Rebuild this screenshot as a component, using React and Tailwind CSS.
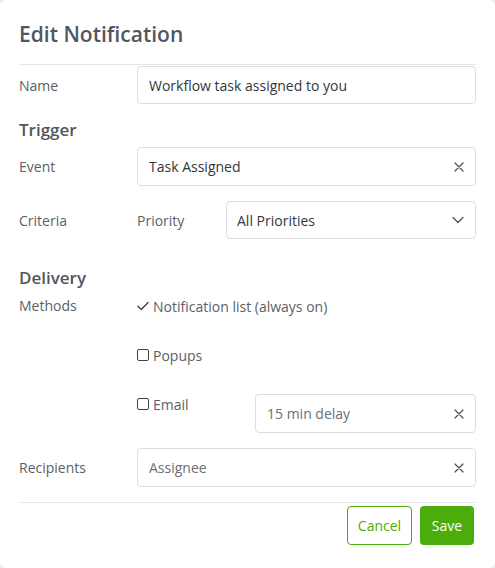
import React from "react";

const XIcon = () => (
  <svg width="10" height="10" viewBox="0 0 10 10" className="shrink-0">
    <path d="M1 1L9 9M9 1L1 9" stroke="#4b4f56" strokeWidth="1.2" strokeLinecap="round" />
  </svg>
);

const Chevron = () => (
  <svg width="12" height="8" viewBox="0 0 12 8" className="shrink-0">
    <path d="M1 1.5L6 6.5L11 1.5" fill="none" stroke="#4b4f56" strokeWidth="1.2" strokeLinecap="round" strokeLinejoin="round" />
  </svg>
);

const Check = () => (
  <svg width="12" height="10" viewBox="0 0 12 10" className="shrink-0">
    <path d="M1 5.2L4.3 8.5L11 1.5" fill="none" stroke="#40444b" strokeWidth="1.4" strokeLinecap="round" strokeLinejoin="round" />
  </svg>
);

const Box = () => (
  <span className="inline-block w-[12px] h-[12px] border border-[#3e4249] rounded-[2px] shrink-0" />
);

export default function App() {
  return (
    <div
      className="w-[495px] h-[568px] bg-[#ededed]"
      style={{ fontFamily: '"Open Sans", "Noto Sans", sans-serif' }}
    >
      <div className="w-full h-full bg-white rounded-[6px] px-[19px] flex flex-col text-[14px] text-[#5b5f67]">
        <div className="pt-[20px] pb-[16px] border-b border-[#e4e5e8]">
          <h1 className="text-[21px] leading-[28px] font-semibold text-[#52565e]">Edit Notification</h1>
        </div>

        <div className="mt-[1px] grid grid-cols-[118px_1fr] items-center">
          <span>Name</span>
          <div className="h-[38px] border border-[#dcdee2] rounded-[4px] px-[11px] flex items-center text-[#33363b]">
            Workflow task assigned to you
          </div>
        </div>

        <h2 className="mt-[14px] text-[17px] leading-[24px] font-semibold text-[#52565e]">Trigger</h2>

        <div className="mt-[5px] grid grid-cols-[118px_1fr] items-center">
          <span>Event</span>
          <div className="h-[39px] border border-[#dcdee2] rounded-[4px] pl-[11px] pr-[11px] flex items-center justify-between text-[#33363b]">
            <span>Task Assigned</span>
            <XIcon />
          </div>
        </div>

        <div className="mt-[15px] grid grid-cols-[118px_89px_1fr] items-center">
          <span>Criteria</span>
          <span>Priority</span>
          <div className="h-[38px] border border-[#dcdee2] rounded-[4px] pl-[10px] pr-[11px] flex items-center justify-between text-[#33363b]">
            <span>All Priorities</span>
            <Chevron />
          </div>
        </div>

        <h2 className="mt-[27px] text-[17px] leading-[24px] font-semibold text-[#52565e]">Delivery</h2>

        <div className="mt-[6px] grid grid-cols-[118px_1fr] items-start">
          <span className="leading-[20px]">Methods</span>
          <div className="flex flex-col">
            <div className="h-[20px] flex items-center gap-[4px]">
              <Check />
              <span>Notification list (always on)</span>
            </div>
            <div className="mt-[29px] h-[20px] flex items-center gap-[4px]">
              <Box />
              <span>Popups</span>
            </div>
            <div className="mt-[29px] grid grid-cols-[118px_1fr] items-start">
              <div className="h-[20px] flex items-center gap-[4px]">
                <Box />
                <span>Email</span>
              </div>
              <div className="h-[39px] border border-[#dcdee2] rounded-[4px] pl-[11px] pr-[11px] flex items-center justify-between text-[#6b6f76]">
                <span>15 min delay</span>
                <XIcon />
              </div>
            </div>
          </div>
        </div>

        <div className="mt-[15px] grid grid-cols-[118px_1fr] items-center">
          <span>Recipients</span>
          <div className="h-[39px] border border-[#dcdee2] rounded-[4px] pl-[11px] pr-[11px] flex items-center justify-between text-[#6b6f76]">
            <span>Assignee</span>
            <XIcon />
          </div>
        </div>

        <div className="mt-[15px] border-t border-[#e4e5e8] pt-[3px] pr-[2px] flex justify-end gap-[8px]">
          <button className="h-[39px] w-[65px] border border-[#4aad0c] rounded-[4px] text-[#4aad0c] bg-white">
            Cancel
          </button>
          <button className="h-[39px] w-[54px] rounded-[4px] bg-[#4aad0c] text-white">
            Save
          </button>
        </div>
      </div>
    </div>
  );
}
